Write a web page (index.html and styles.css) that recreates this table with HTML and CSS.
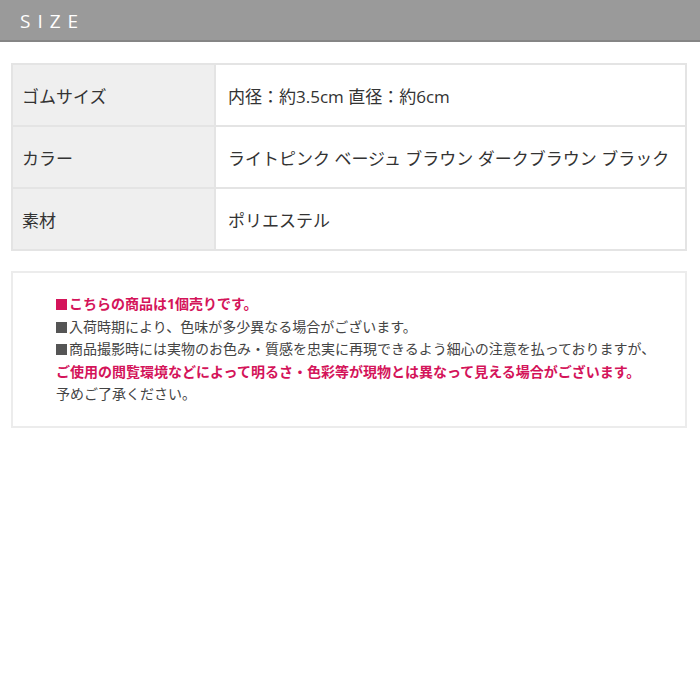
FILE: index.html
```html
<!DOCTYPE html>
<html lang="ja">
<head>
<meta charset="utf-8">
<link rel="stylesheet" href="styles.css">
</head>
<body>
<header class="bar"><h1 class="bar-title">SIZE</h1></header>
<main class="content">
  <table class="spec">
    <tr><th>ゴムサイズ</th><td>内径：約3.5cm 直径：約6cm</td></tr>
    <tr><th>カラー</th><td>ライトピンク ベージュ ブラウン ダークブラウン ブラック</td></tr>
    <tr><th>素材</th><td>ポリエステル</td></tr>
  </table>
  <section class="notice">
    <p class="pink"><span class="sq sq-pink"></span>こちらの商品は1個売りです。</p>
    <p><span class="sq"></span>入荷時期により、色味が多少異なる場合がございます。</p>
    <p><span class="sq"></span>商品撮影時には実物のお色み・質感を忠実に再現できるよう細心の注意を払っておりますが、</p>
    <p class="pink">ご使用の閲覧環境などによって明るさ・色彩等が現物とは異なって見える場合がございます。</p>
    <p>予めご了承ください。</p>
  </section>
</main>
</body>
</html>
```
FILE: styles.css
```css
html, body { margin: 0; padding: 0; background: #fff; }
body {
  font-family: "Open Sans", "Noto Sans CJK JP", sans-serif;
  color: #333;
}
.bar {
  background: #9a9a9a;
  height: 40px;
  border-bottom: 2px solid #858585;
  display: flex;
  align-items: center;
  padding-left: 20px;
}
.bar-title {
  margin: 0;
  font-weight: 400;
  font-size: 19px;
  letter-spacing: 7px;
  color: #fff;
  padding-top: 2px;
}
.content {
  padding: 21px 13px 0 11px;
}
.spec {
  width: 100%;
  border-collapse: collapse;
  font-size: 17px;
}
.spec th, .spec td {
  border: 2px solid #e4e4e4;
  height: 60px;
  padding: 0 0 0 12px;
  text-align: left;
  font-weight: 400;
  color: #333;
}
.spec th {
  width: 192px;
  background: #efefef;
  padding-left: 9px;
}
.notice {
  margin-top: 20px;
  border: 2px solid #ececec;
  padding: 20px 0 20px 43px;
  font-size: 14px;
}
.notice p {
  margin: 0;
  line-height: 22.5px;
  color: #444;
}
.notice p.pink {
  color: #d4145a;
  font-weight: 700;
}
.sq {
  display: inline-block;
  width: 11px;
  height: 11px;
  background: #555;
  margin-right: 2px;
  vertical-align: -1px;
}
.sq-pink { background: #d4145a; }
```
